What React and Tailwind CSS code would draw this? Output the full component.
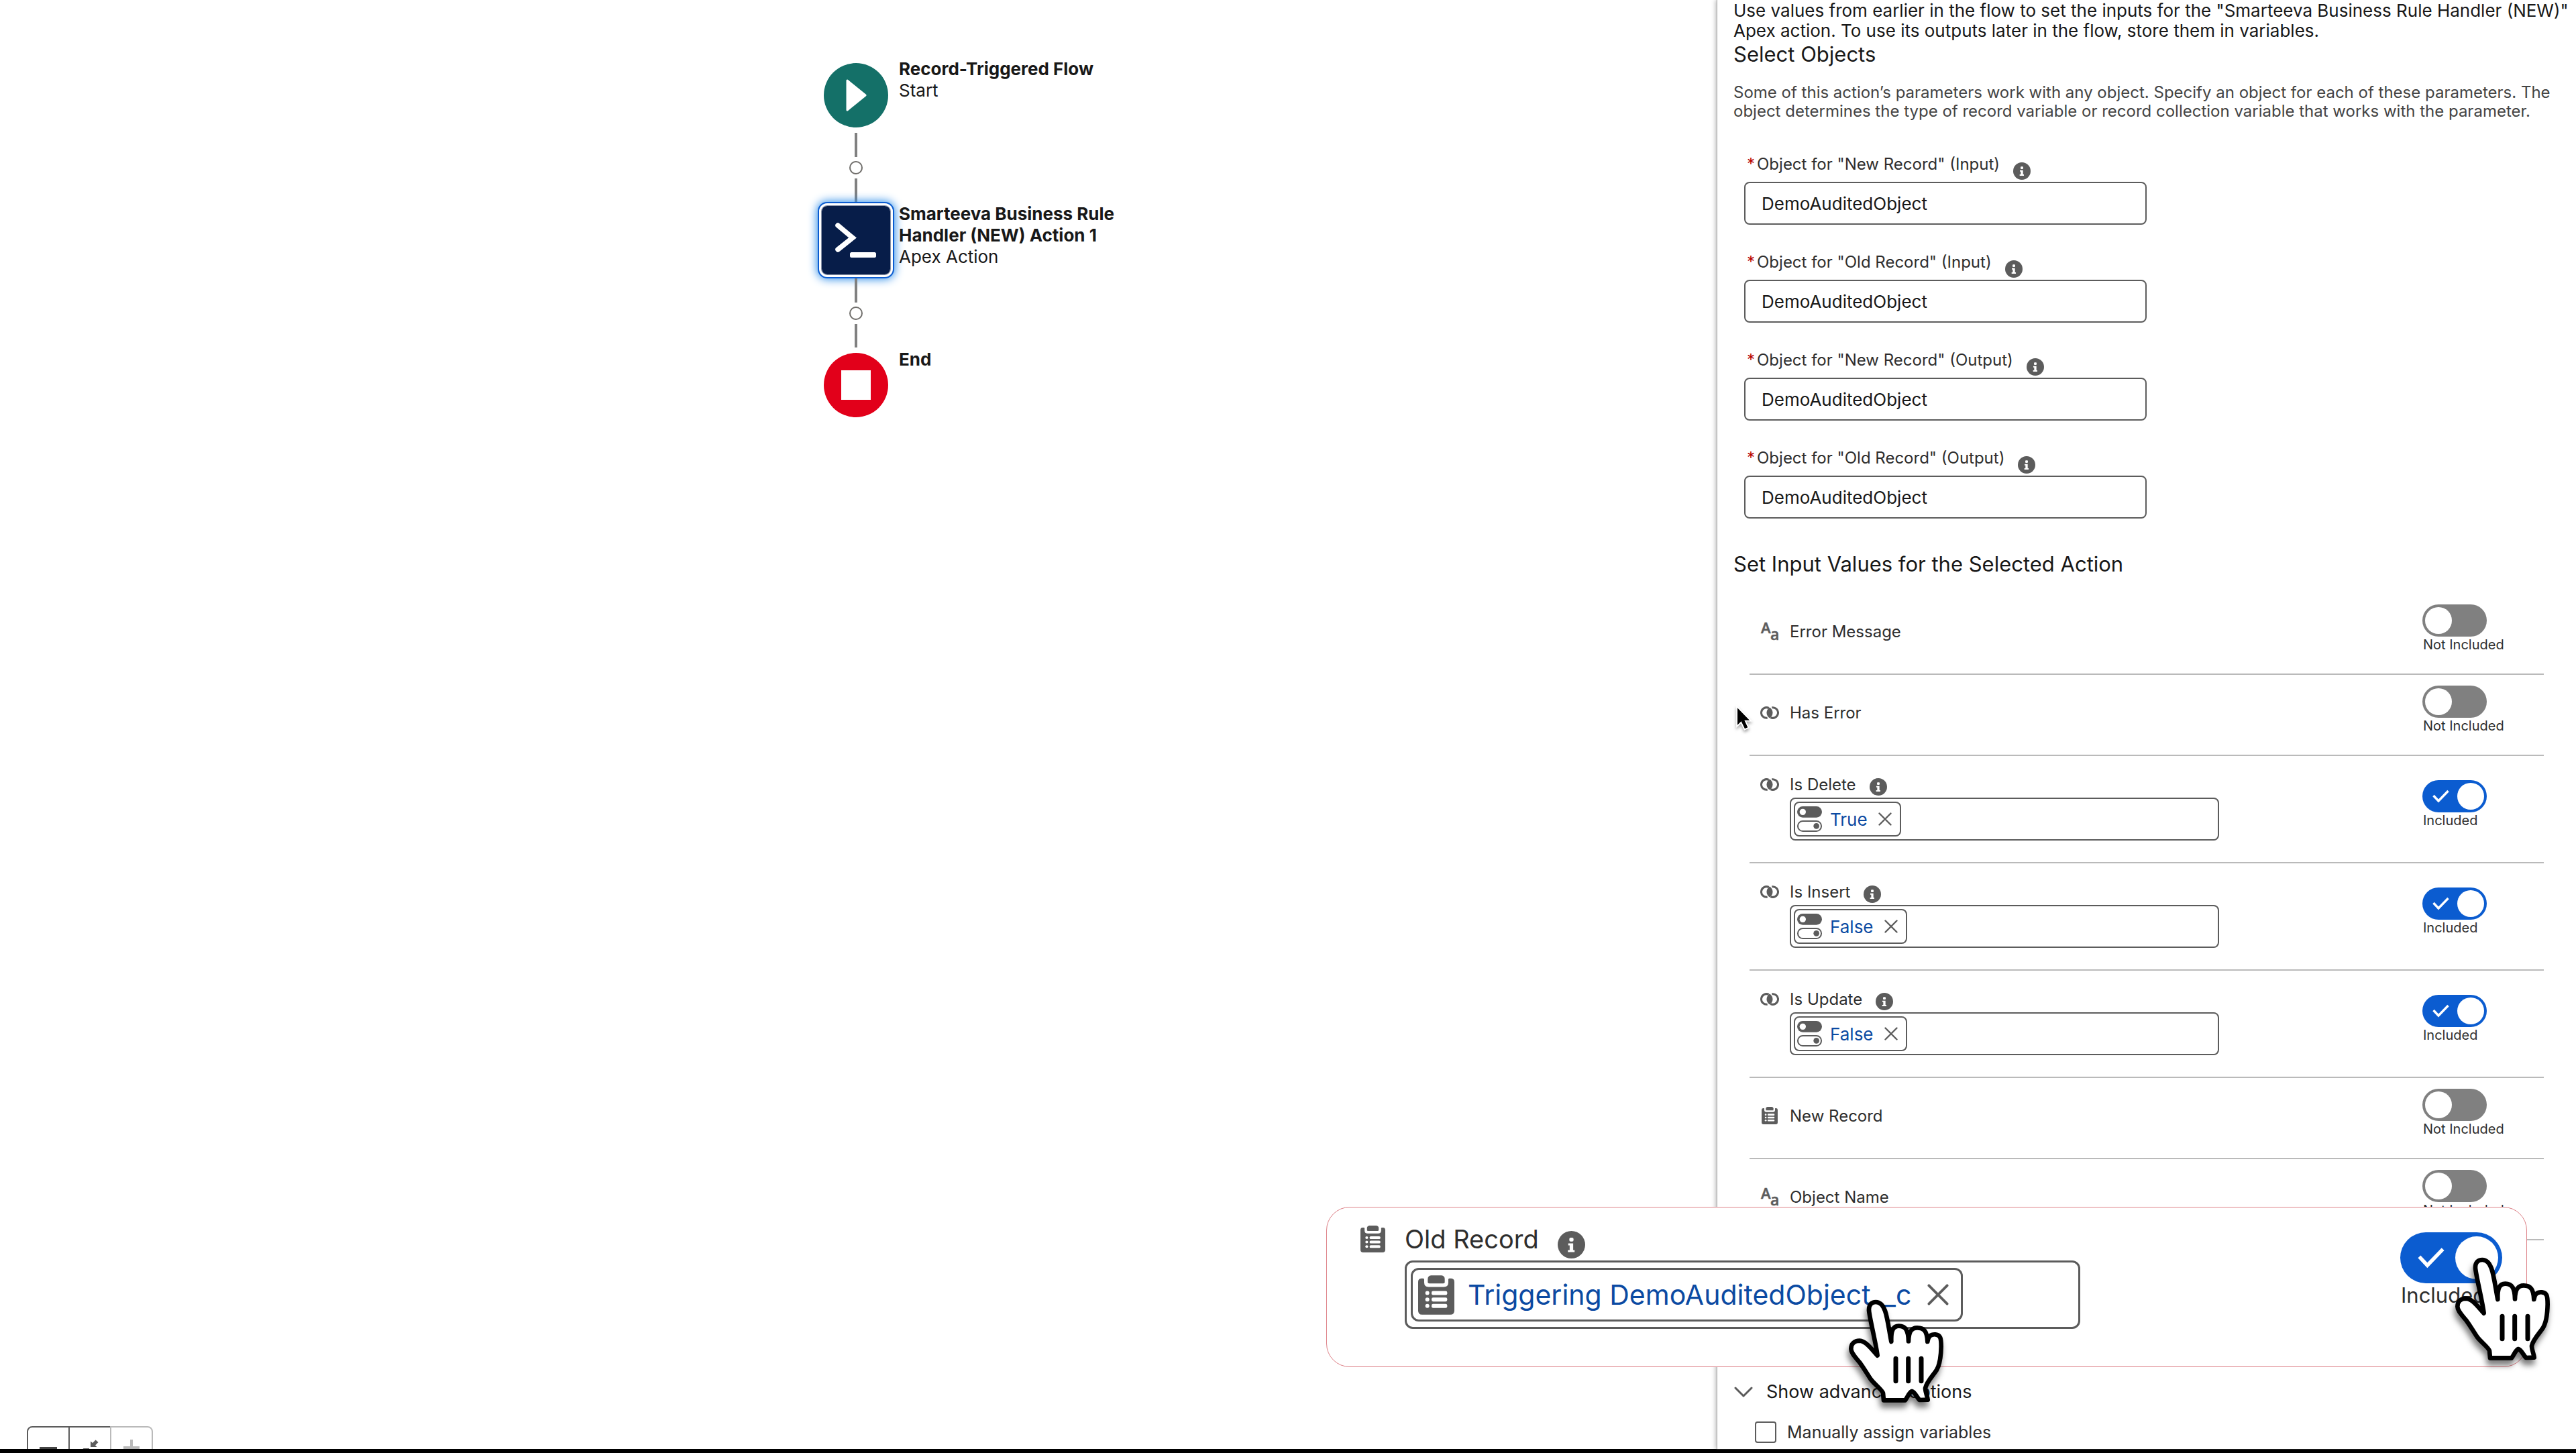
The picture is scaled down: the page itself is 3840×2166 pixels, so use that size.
import { useState } from 'react';

const objectFields = [
  { id: 'new-in', label: 'Object for "New Record" (Input)' },
  { id: 'old-in', label: 'Object for "Old Record" (Input)' },
  { id: 'new-out', label: 'Object for "New Record" (Output)' },
  { id: 'old-out', label: 'Object for "Old Record" (Output)' },
];

const inputRows = [
  { id: 'error-message', label: 'Error Message', type: 'text' },
  { id: 'has-error', label: 'Has Error', type: 'boolean' },
  { id: 'is-delete', label: 'Is Delete', type: 'boolean', value: 'True' },
  { id: 'is-insert', label: 'Is Insert', type: 'boolean', value: 'False' },
  { id: 'is-update', label: 'Is Update', type: 'boolean', value: 'False' },
  { id: 'new-record', label: 'New Record', type: 'record' },
  { id: 'object-name', label: 'Object Name', type: 'text' },
];

function InfoIcon({ className }) {
  return (
    <svg viewBox="0 0 78 78" className={className} aria-hidden="true">
      <circle cx="39" cy="39" r="39" fill="#5c5c5c" />
      <rect x="33" y="19" width="12" height="11" rx="4" fill="#fff" />
      <path d="M30 35h14v19h4v6H29v-6h5V41h-4z" fill="#fff" />
    </svg>
  );
}

function ClipboardIcon({ className }) {
  return (
    <svg viewBox="0 0 162 176" className={className} aria-hidden="true">
      <path
        d="M14 14C19 13 27 13 27 18V32Q27 52 47 52H115Q135 52 135 32V18C135 13 143 13 148 14Q162 15 162 30V158Q162 176 144 176H18Q0 176 0 158V30Q0 15 14 14Z"
        fill="#5c5c5c"
      />
      <path d="M58 0H104Q119 2 119 16V30Q119 36 112 36H50Q43 36 43 30V16Q43 2 58 0Z" fill="#5c5c5c" />
      <g fill="#fff">
        {[79, 108, 137].map((y) => (
          <g key={y}>
            <circle cx="41" cy={y} r="9" />
            <rect x="60" y={y - 9} width="70" height="18" rx="7" />
          </g>
        ))}
      </g>
    </svg>
  );
}

function BooleanIcon() {
  return (
    <svg viewBox="0 0 84 56" className="h-[19px] w-7" aria-hidden="true">
      <path d="M38 6.800A23.500 23.500 0 1 0 32 51.200" fill="none" stroke="#5c5c5c" strokeWidth="9" />
      <path d="M52 4.800A23.500 23.500 0 1 1 46 49.200" fill="none" stroke="#5c5c5c" strokeWidth="9" />
      <path d="M42 4A28 28 0 0 1 42 52A28 28 0 0 1 42 4Z" fill="#5c5c5c" />
    </svg>
  );
}

function TextIcon() {
  return (
    <svg viewBox="0 0 28 28" className="size-7 overflow-visible" aria-hidden="true">
      <g fill="#5c5c5c" stroke="#5c5c5c" strokeWidth="0.500" fontFamily="Open Sans, sans-serif" fontWeight="600">
        <text x="1" y="17" fontSize="22">A</text>
        <text x="15" y="27" fontSize="23">a</text>
      </g>
    </svg>
  );
}

function TypeIcon({ type }) {
  if (type === 'text') return <TextIcon />;
  if (type === 'boolean') return <BooleanIcon />;
  return <ClipboardIcon className="h-[26px] w-6" />;
}

function ConstantIcon() {
  return (
    <svg viewBox="0 0 111 114" className="h-[38px] w-[37px] shrink-0" aria-hidden="true">
      <rect x="0" y="0" width="111" height="50" rx="25" fill="#5c5c5c" />
      <circle cx="25" cy="25" r="14" fill="#fff" />
      <rect x="3" y="66" width="105" height="45" rx="22" fill="#fff" stroke="#5c5c5c" strokeWidth="6" />
      <circle cx="86" cy="88" r="13" fill="#5c5c5c" />
    </svg>
  );
}

function CloseIcon({ className }) {
  return (
    <svg viewBox="0 0 20 20" className={className} aria-hidden="true">
      <path d="M1.500 1.500L18.500 18.500M18.500 1.500L1.500 18.500" stroke="#5c5c5c" strokeWidth="2.400" strokeLinecap="round" />
    </svg>
  );
}

function HandPointer({ className }) {
  return (
    <svg
      viewBox="0 0 540 540"
      className={`pointer-events-none absolute size-[180px] drop-shadow-[-2px_8px_4px_rgba(0,0,0,0.5)] ${className}`}
      aria-hidden="true"
    >
      <path
        d="M204 502L201 470C198 456 160 428 146 408C128 382 118 362 98 335C80 312 58 292 58 272C58 248 74 236 96 236C126 238 148 272 176 302C170 250 142 140 138 100C137 74 150 63 169 63C190 63 202 80 210 102C222 136 228 190 238 240C236 190 246 170 272 170C302 170 314 190 315 238C316 198 326 178 354 178C386 178 398 196 400 240C402 218 414 206 436 208C458 210 461 226 461 262C460 310 456 342 440 368C424 392 396 420 390 448C390 466 399 482 401 500L364 501C352 488 344 466 330 462C318 466 310 490 300 502Z"
        fill="#fff"
        stroke="#000"
        strokeWidth="20"
        strokeLinejoin="round"
      />
      <path d="M258 316V416M314 316V416M372 316V416" stroke="#000" strokeWidth="21" strokeLinecap="round" />
    </svg>
  );
}

function Toggle({ id, label, on, large }) {
  const [checked, setChecked] = useState(on);
  const track = large ? 'h-[76px] w-[152px] p-[6px]' : 'h-12 w-24 p-1';
  const knob = large ? 'size-16' : 'size-10';
  const text = large ? 'text-[31px] leading-9' : 'text-[20px] leading-6';
  return (
    <label htmlFor={id} className="flex cursor-pointer flex-col items-start">
      <input
        id={id}
        type="checkbox"
        role="switch"
        aria-label={label}
        checked={checked}
        onChange={(e) => setChecked(e.target.checked)}
        className="sr-only"
      />
      <span
        className={`flex items-center rounded-full ${track} ${checked ? 'justify-end gap-3 bg-[#0b5cd0]' : 'justify-start bg-[#808080]'}`}
      >
        {checked && (
          <svg viewBox="0 0 25 20" className={large ? 'mr-1 h-8 w-10' : 'h-5 w-[25px]'} aria-hidden="true">
            <path d="M1.500 9L9 17L23.500 2" fill="none" stroke="#fff" strokeWidth="3.400" />
          </svg>
        )}
        <span className={`rounded-full bg-white ${knob}`} />
      </span>
      <span className={`px-px text-[#2e2e2e] ${text}`}>{checked ? 'Included' : 'Not Included'}</span>
    </label>
  );
}

function ObjectField({ id, label }) {
  return (
    <div className="w-[600px]">
      <div className="flex h-[43px] items-start pl-1 pt-px text-[24px] leading-8 text-[#2e2e2e]">
        <span className="w-[15px] shrink-0 text-[#b60000]" aria-hidden="true">*</span>
        <label htmlFor={id}>{label}</label>
        <button type="button" aria-label="Help" className="ml-5 mt-[13px]">
          <InfoIcon className="size-[26px]" />
        </button>
      </div>
      <input
        id={id}
        type="text"
        required
        defaultValue="DemoAuditedObject"
        className="h-16 w-full rounded-lg border-2 border-[#5c5c5c] bg-white px-6 text-[26px] text-[#181818]"
      />
    </div>
  );
}

function InputRow({ id, label, type, value }) {
  const included = Boolean(value);
  return (
    <li className="flex border-b-2 border-[#bababa] pl-4">
      <div className={`flex flex-1 gap-4 ${included ? 'pt-[26px] pb-8' : 'pt-10'}`}>
        <div className="flex h-8 w-7 items-center justify-center">
          <TypeIcon type={type} />
        </div>
        <div className="flex flex-col gap-1">
          <div className="flex h-8 items-center text-[24px] leading-8 text-[#2e2e2e]">
            <label htmlFor={included ? `${id}-value` : `${id}-toggle`} className="pt-px">{label}</label>
            {included && (
              <button type="button" aria-label="Help" className="ml-5 mt-2">
                <InfoIcon className="size-[26px]" />
              </button>
            )}
          </div>
          {included && (
            <div className="flex h-16 w-[640px] items-center rounded-lg border-2 border-[#5c5c5c] bg-white px-1">
              <span className="flex h-[52px] items-center rounded-lg border-2 border-[#5c5c5c] pl-[3px] pr-3">
                <ConstantIcon />
                <span className="ml-3 mt-px text-[26px] leading-8 text-[#0b4aa2]">{value}</span>
                <button type="button" aria-label={`Remove ${value}`} className="ml-4">
                  <CloseIcon className="size-5" />
                </button>
              </span>
              <input id={`${id}-value`} type="text" className="min-w-0 flex-1 bg-transparent text-[26px]" />
            </div>
          )}
        </div>
      </div>
      <div className={`w-[181px] ${included ? 'pt-9' : 'pt-4 pb-[31px]'}`}>
        <Toggle id={`${id}-toggle`} label={label} on={included} />
      </div>
    </li>
  );
}

function Connector({ className = '' }) {
  return (
    <div className={`flex w-[120px] flex-col items-center gap-[6px] ${className}`}>
      <span className="h-9 w-1 bg-[#808080]" />
      <button type="button" aria-label="Add element" className="size-5 rounded-full border-2 border-[#706e6b] bg-white" />
      <span className="h-[35px] w-1 bg-[#808080]" />
    </div>
  );
}

function FlowCanvas() {
  return (
    <main className="flex flex-1 flex-col justify-between overflow-hidden bg-white">
      <div className="ml-[calc(50%-64px)] flex flex-col pt-[87px] text-[26px] leading-8 text-[#181818]">
        <div className="flex gap-1">
          <div className="flex w-[120px] shrink-0 justify-center pt-[7px]">
            <svg viewBox="0 0 96 96" className="size-24" aria-hidden="true">
              <circle cx="48" cy="48" r="48" fill="#147068" />
              <path d="M35 26L62 48L35 70Z" fill="#fff" stroke="#fff" strokeWidth="3" strokeLinejoin="round" />
            </svg>
          </div>
          <div>
            <p className="font-bold">Record-Triggered Flow</p>
            <p>Start</p>
          </div>
        </div>
        <Connector className="pt-2" />
        <div className="flex gap-1">
          <div className="flex w-[120px] shrink-0 justify-center">
            <button
              type="button"
              aria-label="Smarteeva Business Rule Handler (NEW) Action 1"
              className="size-[114px] rounded-[14px] border-2 border-[#0b5cd0] bg-white p-1 shadow-[0_0_14px_1px_#2a8be8]"
            >
              <svg viewBox="0 0 102 102" className="size-full rounded-lg bg-[#071d49] outline-1 outline-[#8a93a8]" aria-hidden="true">
                <path d="M24 29L46 47.500L24 65" fill="none" stroke="#fff" strokeWidth="7.500" strokeLinecap="round" strokeLinejoin="miter" />
                <rect x="42" y="69" width="39" height="8" rx="2.500" fill="#fff" />
              </svg>
            </button>
          </div>
          <div className="w-[360px] pt-0.5">
            <p className="font-bold">Smarteeva Business Rule Handler (NEW) Action 1</p>
            <p>Apex Action</p>
          </div>
        </div>
        <Connector />
        <div className="flex gap-1">
          <div className="flex w-[120px] shrink-0 justify-center pt-2">
            <div className="flex size-24 items-center justify-center rounded-full bg-[#e2001a]">
              <span className="size-11 bg-white" />
            </div>
          </div>
          <p className="pt-0.5 font-bold">End</p>
        </div>
      </div>
      <div className="h-[34px] overflow-hidden pl-10">
        <div className="flex h-16">
          <button type="button" aria-label="Zoom out" className="flex w-16 items-center justify-center rounded-l-lg border-2 border-[#5c5c5c]">
            <span className="h-[3px] w-[26px] bg-[#444444]" />
          </button>
          <button type="button" aria-label="Fit to view" className="flex w-[60px] items-center justify-center border-y-2 border-[#5c5c5c]">
            <svg viewBox="0 0 32 32" className="size-8" fill="#5c5c5c" aria-hidden="true">
              <path d="M17 15V6.500L20 9L24.500 4.500L28.500 8L24 12.500L26.500 15Z" />
              <path d="M15 17V25.500L12 23L7.500 27.500L3.500 24L8 19.500L5.500 17Z" />
            </svg>
          </button>
          <button type="button" aria-label="Zoom in" disabled className="flex w-16 items-center justify-center rounded-r-lg border-2 border-[#bababa]">
            <svg viewBox="0 0 24 24" className="size-6" aria-hidden="true">
              <path d="M12 0V24M0 12H24" stroke="#bababa" strokeWidth="4" />
            </svg>
          </button>
        </div>
      </div>
    </main>
  );
}

function ActionPanel() {
  return (
    <aside className="relative w-1/3 shrink-0 overflow-y-clip bg-white pl-6 pr-2 text-[#181818] shadow-[-1px_0_1px_#b0b0b0,-3px_0_6px_rgba(0,0,0,0.25)]">
      <p className="pt-px text-[26px] leading-[30px]">
        Use values from earlier in the flow to set the inputs for the "Smarteeva Business Rule Handler (NEW)" Apex action. To use
        its outputs later in the flow, store them in variables.
      </p>
      <h2 className="text-[31px] leading-10">Select Objects</h2>
      <p className="mt-[23px] text-[24px] leading-7 text-[#444444]">
        Some of this action’s parameters work with any object. Specify an object for each of these parameters. The object
        determines the type of record variable or record collection variable that works with the parameter.
      </p>
      <div className="ml-4 mt-12 flex flex-col gap-[39px]">
        {objectFields.map((field) => (
          <ObjectField key={field.id} {...field} />
        ))}
      </div>
      <h2 className="mt-12 text-[31px] leading-10">Set Input Values for the Selected Action</h2>
      <ul className="ml-6 mr-10 mt-6">
        {inputRows.map((row) => (
          <InputRow key={row.id} {...row} />
        ))}
      </ul>
      <button type="button" aria-expanded="true" className="mt-[210px] flex h-8 items-center gap-5 pl-px text-[27px] leading-8">
        <svg viewBox="0 0 28 16" className="h-4 w-7" aria-hidden="true">
          <path d="M2 2L14 14L26 2" fill="none" stroke="#5c5c5c" strokeWidth="3" strokeLinecap="round" strokeLinejoin="round" />
        </svg>
        Show advanced options
      </button>
      <div className="ml-8 mt-7 flex items-center gap-4 text-[25px] leading-8 text-[#2e2e2e]">
        <input id="manual-assign" type="checkbox" className="size-8 appearance-none rounded-[4px] border-2 border-[#5c5c5c] bg-white" />
        <label htmlFor="manual-assign">Manually assign variables</label>
      </div>
      <svg
        viewBox="0 0 120 180"
        className="pointer-events-none absolute left-5 top-[1040px] h-[60px] w-10 drop-shadow-[0_3px_2px_rgba(0,0,0,0.35)]"
        aria-hidden="true"
      >
        <path
          d="M30 46V122L47 106L63 139L76 133L61 101H84Z"
          fill="#000"
          stroke="#fff"
          strokeWidth="11"
          strokeLinejoin="miter"
          paintOrder="stroke"
        />
      </svg>
    </aside>
  );
}

function OldRecordCallout() {
  return (
    <section className="absolute right-[73px] top-[1799px] flex w-[1790px] rounded-[35px] border border-[#dd7f86] bg-white pb-14 pl-[50px] pt-[23px]">
      <div className="flex flex-1 gap-[29px]">
        <div className="flex h-12 items-center">
          <ClipboardIcon className="h-[42px] w-[37px]" />
        </div>
        <div className="flex flex-col gap-2">
          <div className="flex h-12 items-center text-[38px] leading-[48px] text-[#2e2e2e]">
            <label htmlFor="old-record-value">Old Record</label>
            <button type="button" aria-label="Help" className="ml-7 mt-4">
              <InfoIcon className="size-[41px]" />
            </button>
          </div>
          <div className="flex h-[102px] w-[1007px] items-center rounded-xl border-[3px] border-[#5c5c5c] bg-white px-[6px]">
            <span className="flex h-20 items-center rounded-xl border-[3px] border-[#5c5c5c] pl-2 pr-[18px]">
              <ClipboardIcon className="h-[59px] w-[54px] shrink-0" />
              <span className="ml-5 whitespace-nowrap text-[41px] leading-[48px] text-[#0b4aa2]">
                Triggering DemoAuditedObject__c
              </span>
              <button type="button" aria-label="Remove Triggering DemoAuditedObject__c" className="ml-6">
                <CloseIcon className="size-8" />
              </button>
            </span>
            <input id="old-record-value" type="text" className="min-w-0 flex-1 bg-transparent text-[41px]" />
          </div>
        </div>
      </div>
      <div className="mr-9 pt-[14px]">
        <Toggle id="old-record-toggle" label="Old Record" on large />
      </div>
      <HandPointer className="left-[762px] top-[120px]" />
      <HandPointer className="right-[-58px] top-[57px]" />
    </section>
  );
}

export default function App() {
  return (
    <div className="relative flex h-screen flex-col overflow-hidden bg-white font-['Inter',sans-serif]">
      <div className="flex min-h-0 flex-1">
        <FlowCanvas />
        <ActionPanel />
      </div>
      <OldRecordCallout />
      <div className="h-[6px] shrink-0 bg-black" />
    </div>
  );
}
